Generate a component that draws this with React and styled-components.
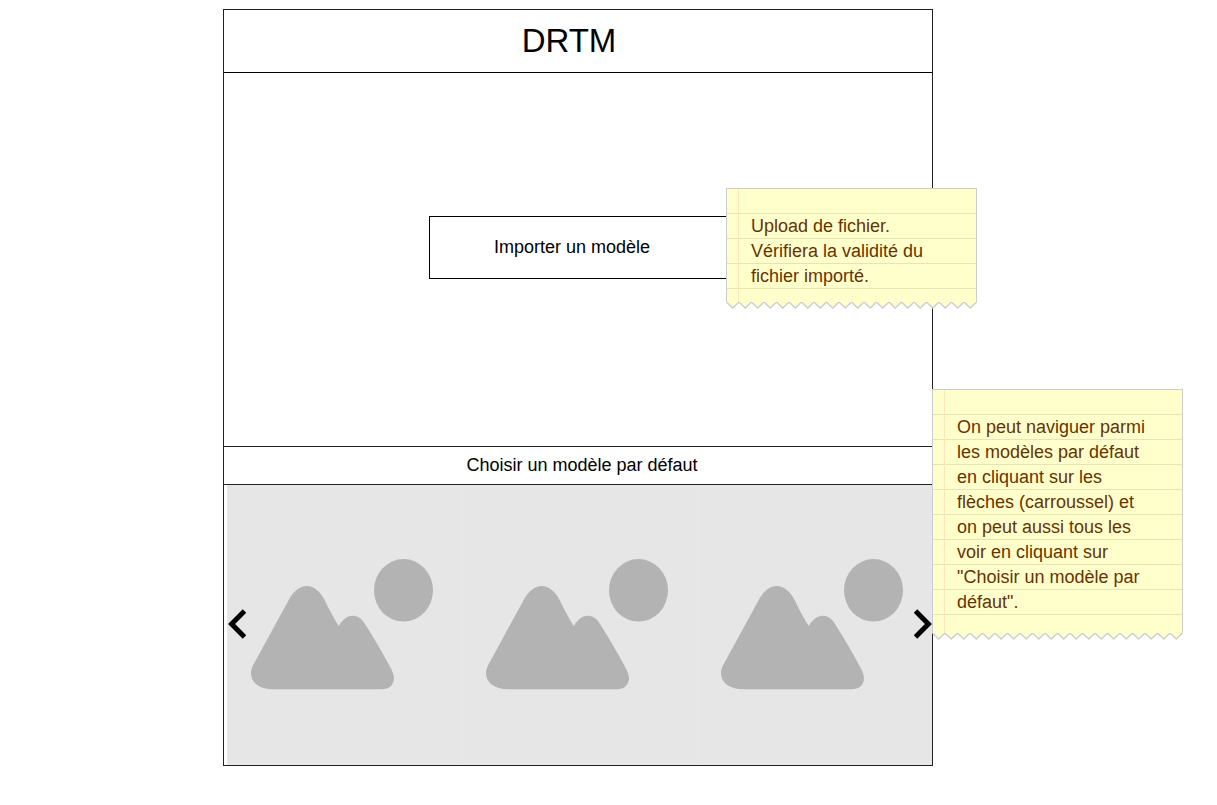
import React from "react";
import styled, { createGlobalStyle } from "styled-components";

const GlobalStyle = createGlobalStyle`
  *, *::before, *::after {
    box-sizing: border-box;
  }

  body {
    margin: 0;
    background: #fff;
    color: #000;
    font-family: "Liberation Sans", Arial, sans-serif;
    font-size: 18px;
  }
`;

const Page = styled.div`
  display: grid;
  grid-template-columns: minmax(0, 1fr) 251px;
  align-items: start;
  padding: 9px 34px 39px 223px;
`;

const Frame = styled.main`
  display: flex;
  flex-direction: column;
  margin-right: -1px;
  border: 1px solid #222;
`;

const Header = styled.header`
  display: flex;
  align-items: center;
  justify-content: center;
  min-height: 63px;
  padding-right: 18px;
  border-bottom: 1px solid #000;
`;

const Title = styled.h1`
  margin: 0;
  font-size: 33px;
  line-height: 38px;
  font-weight: 400;
`;

const ImportArea = styled.section`
  position: relative;
  display: flex;
  justify-content: center;
  padding: 143px 0 167px;
`;

const ImportButton = styled.button`
  width: 298px;
  height: 63px;
  padding: 0 12px 0 0;
  border: 1px solid #000;
  background: #fff;
  color: inherit;
  font: inherit;
  cursor: pointer;
`;

const ChooseButton = styled.button`
  width: 100%;
  height: 39px;
  padding: 0 0 1px 8px;
  border: solid #222;
  border-width: 1px 0;
  background: #fff;
  color: inherit;
  font: inherit;
  cursor: pointer;
`;

const Carousel = styled.section`
  position: relative;
  padding-left: 3px;
`;

const Slides = styled.ul`
  display: grid;
  grid-template-columns: repeat(3, minmax(0, 1fr));
  margin: 0;
  padding: 0;
  list-style: none;
`;

const Slide = styled.li`
  height: 280px;
  background: #e6e6e6;
  box-shadow: inset 1px 0 #e9e9e9;
`;

const Picture = styled.svg`
  display: block;
  width: 100%;
  height: 280px;
`;

const ArrowButton = styled.button`
  position: absolute;
  top: 124px;
  ${({ $side }) => $side}: ${({ $side }) => ($side === "left" ? 4 : 0)}px;
  display: flex;
  padding: 0;
  border: 0;
  background: none;
  cursor: pointer;
`;

const NoteBox = styled.aside`
  position: relative;
  z-index: 1;
  width: 251px;
  color: #663300;
`;

const ImportNote = styled(NoteBox)`
  position: absolute;
  top: 115px;
  right: -45px;
`;

const CarouselNote = styled(NoteBox)`
  margin-top: 380px;
`;

const NotePaper = styled.div`
  padding: 25px 25px ${({ $tail }) => $tail}px 24px;
  border: 1px solid #ccc;
  border-bottom: 0;
  background:
    linear-gradient(#ffe6b8, #ffe6b8) 11px 0 / 1px 100% no-repeat,
    repeating-linear-gradient(#ffffcc 0 24px, #e6e3b4 24px 25px);
`;

const NoteText = styled.p`
  margin: 0;
  line-height: 25px;
`;

const TornEdge = styled.svg`
  display: block;
  width: 100%;
  height: 8px;
`;

const teeth = Array.from({ length: 20 }, (_, i) => {
  const x = 0.5 + i * 12.5;
  return `L${x + 6.25} 6L${x + 12.5} 0`;
}).join("");

function Note({ as: Box, tail, children }) {
  return (
    <Box>
      <NotePaper $tail={tail}>
        <NoteText>{children}</NoteText>
      </NotePaper>
      <TornEdge viewBox="0 0 251 8" aria-hidden="true">
        <path d={`M0.5 0${teeth}Z`} fill="#ffffcc" />
        <path d={`M0.5 0${teeth}`} fill="none" stroke="#ccc" strokeWidth="1.3" />
      </TornEdge>
    </Box>
  );
}

function Placeholder({ label }) {
  return (
    <Picture viewBox="0 0 235 280" role="img" aria-label={label}>
      <g fill="#b3b3b3">
        <path d="M28 176.7L61.3 115.7C66.5 106 73 101 79.7 101C86.5 101 93 106 98 115.7C103 126 107.5 134.5 111.7 141C115.5 134.500 120.5 130.7 125.3 130.7C130.5 130.7 134.5 133 138 139C147 153 156 168.5 163 181.7C165.5 186 167 190 167 193.5C166.5 200.5 162 204.2 154.7 204.2H46C32 204.2 24 197.5 24 188C24 184 25.5 181 28 176.7Z" />
        <ellipse cx="176.5" cy="105.3" rx="29.5" ry="31.3" />
      </g>
    </Picture>
  );
}

function Arrow({ side, label }) {
  return (
    <ArrowButton type="button" $side={side} aria-label={label}>
      <svg width="18" height="30" viewBox="0 0 18 30" aria-hidden="true">
        <path
          d={side === "left" ? "M16.5 2L3.6 15L16.5 28" : "M1.5 2L14.4 15L1.5 28"}
          fill="none"
          stroke="#000"
          strokeWidth="5"
        />
      </svg>
    </ArrowButton>
  );
}

export default function App() {
  return (
    <>
      <GlobalStyle />
      <Page>
        <Frame>
          <Header>
            <Title>DRTM</Title>
          </Header>
          <ImportArea>
            <ImportButton type="button">Importer un modèle</ImportButton>
            <Note as={ImportNote} tail={13}>
              Upload de fichier.
              <br />
              Vérifiera la validité du fichier importé.
            </Note>
          </ImportArea>
          <ChooseButton type="button">Choisir un modèle par défaut</ChooseButton>
          <Carousel aria-label="Modèles par défaut">
            <Slides>
              {[1, 2, 3].map((n) => (
                <Slide key={n}>
                  <Placeholder label={`Modèle ${n}`} />
                </Slide>
              ))}
            </Slides>
            <Arrow side="left" label="Précédent" />
            <Arrow side="right" label="Suivant" />
          </Carousel>
        </Frame>
        <Note as={CarouselNote} tail={18}>
          On peut naviguer parmi les modèles par défaut en cliquant sur les flèches (carroussel) et
          on peut aussi tous les voir en cliquant sur "Choisir un modèle par défaut".
        </Note>
      </Page>
    </>
  );
}
